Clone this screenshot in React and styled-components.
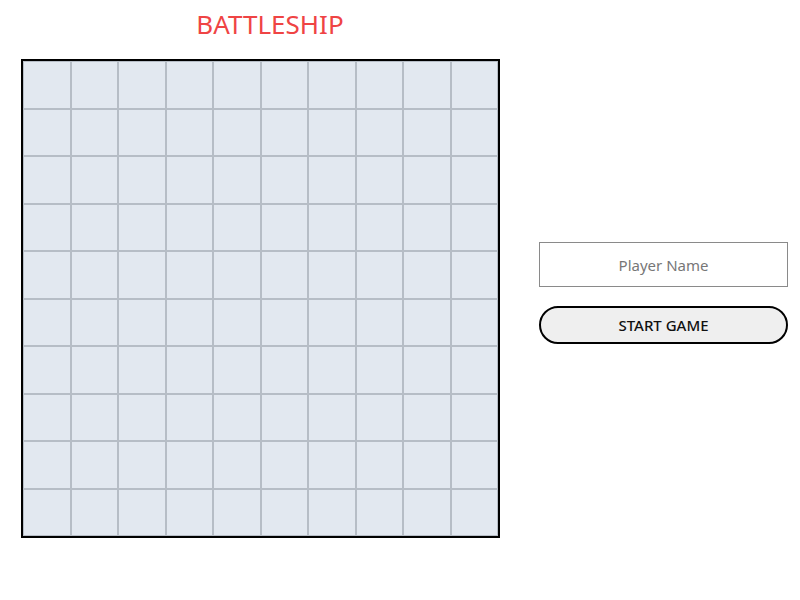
import React from "react";
import styled, { createGlobalStyle } from "styled-components";

const GlobalStyle = createGlobalStyle`
body {
  margin: 0;
  background: #fff;
  font-family: "Noto Sans", "Open Sans", sans-serif;
}
`;

const Page = styled.div`
width: 800px;
height: 600px;
`;

const Title = styled.h1`
width: 540px;
margin: 0;
padding-top: 7px;
height: 59px;
box-sizing: border-box;
text-align: center;
font-size: 26px;
font-weight: 400;
line-height: 34px;
color: #ef4444;
`;

const Row = styled.div`
display: flex;
align-items: center;
padding-left: 21px;
`;

const Board = styled.div`
width: 479px;
height: 479px;
box-sizing: border-box;
border: 2px solid #000;
display: grid;
grid-template-columns: repeat(10, 1fr);
grid-template-rows: repeat(10, 1fr);
background: #e2e8f0;
`;

const Cell = styled.div`
box-sizing: border-box;
border: 1px solid #b6bdc6;
background: #e2e8f0;
`;

const Form = styled.div`
display: flex;
flex-direction: column;
gap: 19px;
width: 249px;
margin-left: 39px;
margin-bottom: 11px;
`;

const NameInput = styled.input`
box-sizing: border-box;
height: 45px;
width: 100%;
border: 1px solid #8a8a8a;
font-family: inherit;
font-size: 15px;
text-align: center;
color: #333;
outline: none;
&::placeholder {
  color: #777;
}
`;

const StartButton = styled.button`
box-sizing: border-box;
height: 38px;
width: 100%;
border: 2px solid #000;
border-radius: 19px;
background: #efefef;
font-family: inherit;
font-size: 15px;
font-weight: 500;
color: #111;
cursor: pointer;
`;

export default function App() {
  const cells = [];
  for (let i = 0; i < 100; i++) {
    cells.push(<Cell key={i} />);
  }
  return (
    <Page>
      <GlobalStyle />
      <Title>BATTLESHIP</Title>
      <Row>
        <Board>{cells}</Board>
        <Form>
          <NameInput placeholder="Player Name" />
          <StartButton>START GAME</StartButton>
        </Form>
      </Row>
    </Page>
  );
}
